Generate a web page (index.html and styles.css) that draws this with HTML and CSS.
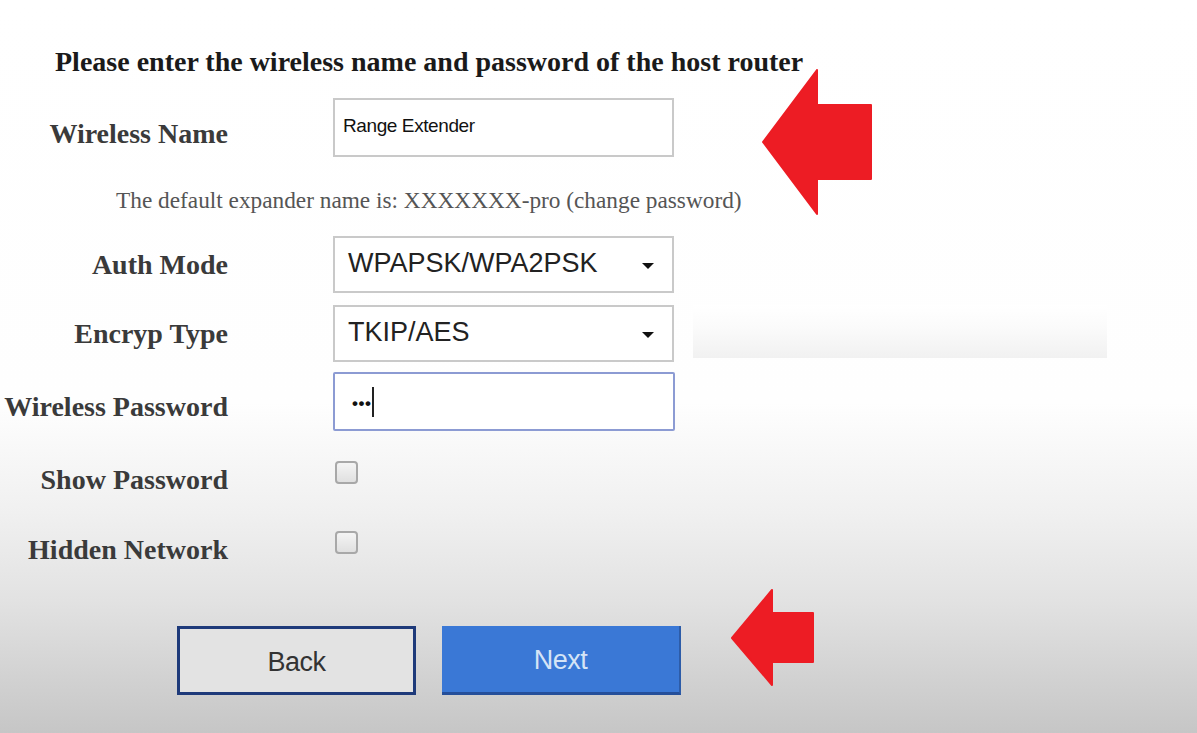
FILE: index.html
```html
<!DOCTYPE html>
<html>
<head>
<meta charset="utf-8">
<link rel="stylesheet" href="styles.css">
</head>
<body>
<div class="page">
  <h1 class="title">Please enter the wireless name and password of the host router</h1>

  <div class="row row-input">
    <label class="lbl lbl-low">Wireless Name</label>
    <div class="field"><span class="field-text small">Range Extender</span></div>
  </div>

  <p class="hint">The default expander name is: XXXXXXX-pro (change password)</p>

  <div class="row row-select first-select">
    <label class="lbl">Auth Mode</label>
    <div class="field select"><span class="field-text">WPAPSK/WPA2PSK</span><span class="caret"></span></div>
  </div>

  <div class="row row-select second-select">
    <label class="lbl">Encryp Type</label>
    <div class="field select"><span class="field-text">TKIP/AES</span><span class="caret"></span></div>
    <div class="ghost"></div>
  </div>

  <div class="row row-input pw-row">
    <label class="lbl lbl-pw">Wireless Password</label>
    <div class="field focus"><span class="dots">&bull;&bull;&bull;</span><span class="cursor"></span></div>
  </div>

  <div class="row row-check">
    <label class="lbl">Show Password</label>
    <span class="check"></span>
  </div>

  <div class="row row-check">
    <label class="lbl">Hidden Network</label>
    <span class="check"></span>
  </div>

  <div class="buttons">
    <button class="btn btn-back">Back</button>
    <button class="btn btn-next">Next</button>
  </div>

  <svg class="arrow arrow-1" width="112" height="146" viewBox="0 0 112 146">
    <path d="M1 73 L55 1 L55 36 L109 36 L109 110 L55 110 L55 145 Z" fill="#ed1c24" stroke="#ed1c24" stroke-width="2" stroke-linejoin="round"/>
  </svg>
  <svg class="arrow arrow-2" width="85" height="98" viewBox="0 0 85 98">
    <path d="M1 49 L41 1 L41 24 L82 24 L82 73 L41 73 L41 96 Z" fill="#ed1c24" stroke="#ed1c24" stroke-width="2" stroke-linejoin="round"/>
  </svg>
</div>
</body>
</html>
```

FILE: styles.css
```css
html, body {
  margin: 0;
  padding: 0;
}
body {
  width: 1197px;
  height: 733px;
  overflow: hidden;
  background: linear-gradient(to bottom, #ffffff 0%, #fefefe 55%, #f0f0f0 70%, #e2e2e2 82%, #c6c6c6 100%);
  font-family: "Liberation Serif", "Times New Roman", serif;
}
.page {
  position: relative;
  width: 1197px;
  height: 733px;
  padding-top: 46px;
  box-sizing: border-box;
}
.title {
  margin: 0 0 0 55px;
  font-size: 28px;
  line-height: 32px;
  font-weight: bold;
  color: #1a1a1a;
  letter-spacing: 0;
  white-space: nowrap;
}
.row {
  display: flex;
  align-items: center;
  column-gap: 105px;
}
.lbl {
  width: 228px;
  flex: none;
  text-align: right;
  font-size: 28px;
  font-weight: bold;
  color: #3a3a3a;
  line-height: 30px;
  white-space: nowrap;
}
.lbl-low {
  padding-top: 12px;
}
.lbl-pw {
  padding-top: 10px;
}
.row-input {
  margin-top: 20px;
  height: 59px;
}
.pw-row {
  margin-top: 10px;
}
.row-select {
  height: 57px;
}
.first-select {
  margin-top: 22px;
}
.second-select {
  margin-top: 12px;
}
.field {
  width: 341px;
  height: 100%;
  box-sizing: border-box;
  border: 2px solid #c9c9c9;
  background: #ffffff;
  display: flex;
  align-items: center;
  padding-left: 13px;
  position: relative;
  flex: none;
}
.field-text {
  font-family: "Liberation Sans", Arial, sans-serif;
  font-size: 27px;
  color: #222;
  letter-spacing: 0;
}
.field-text.small {
  font-size: 19px;
  margin-top: -4px;
  margin-left: -5px;
  letter-spacing: -0.4px;
  color: #111;
}
.select .field-text {
  margin-top: -2px;
}
.caret {
  position: absolute;
  right: 18px;
  top: 25px;
  width: 0;
  height: 0;
  border-left: 6px solid transparent;
  border-right: 6px solid transparent;
  border-top: 6px solid #111;
}
.ghost {
  width: 414px;
  height: 53px;
  margin-left: -86px;
  align-self: flex-start;
  background: linear-gradient(to bottom, #ffffff 0%, #fbfbfb 40%, #f1f1f1 100%);
  flex: none;
}
.focus {
  border-color: #8c9bd3;
  border-width: 2px;
  border-radius: 2px;
  width: 342px;
  padding-left: 17px;
}
.dots {
  font-family: "Liberation Sans", Arial, sans-serif;
  font-size: 17px;
  font-weight: bold;
  letter-spacing: 0.5px;
  color: #111;
  margin-top: 4px;
}
.cursor {
  display: inline-block;
  width: 2px;
  height: 30px;
  background: #222;
  margin-left: 1px;
}
.hint {
  margin: 29px 0 0 116px;
  font-size: 23.3px;
  line-height: 28px;
  color: #555;
  letter-spacing: 0;
  white-space: nowrap;
}
.row-check {
  height: 50px;
  margin-top: 20px;
}
.pw-row + .row-check {
  margin-top: 22px;
}
.row-check .lbl {
  padding-top: 4px;
}
.check {
  width: 23px;
  height: 23px;
  box-sizing: border-box;
  border: 2px solid #a8a8a8;
  border-radius: 4px;
  background: linear-gradient(#f4f4f4, #e0e0e0);
  margin-left: 2px;
  margin-bottom: 12px;
}
.buttons {
  display: flex;
  column-gap: 26px;
  margin: 53px 0 0 177px;
}
.btn {
  width: 239px;
  height: 69px;
  box-sizing: border-box;
  font-family: "Liberation Sans", Arial, sans-serif;
  font-size: 27px;
  letter-spacing: -0.5px;
  padding: 3px 0 0 0;
}
.btn-back {
  background: #e3e3e3;
  border: 3px solid #1e3a7a;
  color: #333;
}
.btn-next {
  background: #3a78d6;
  border: none;
  border-bottom: 3px solid #254f9a;
  border-right: 2px solid #2d5ca8;
  color: #d5e4f6;
}
.arrow {
  position: absolute;
}
.arrow-1 {
  left: 762px;
  top: 69px;
}
.arrow-2 {
  left: 731px;
  top: 589px;
}
```
